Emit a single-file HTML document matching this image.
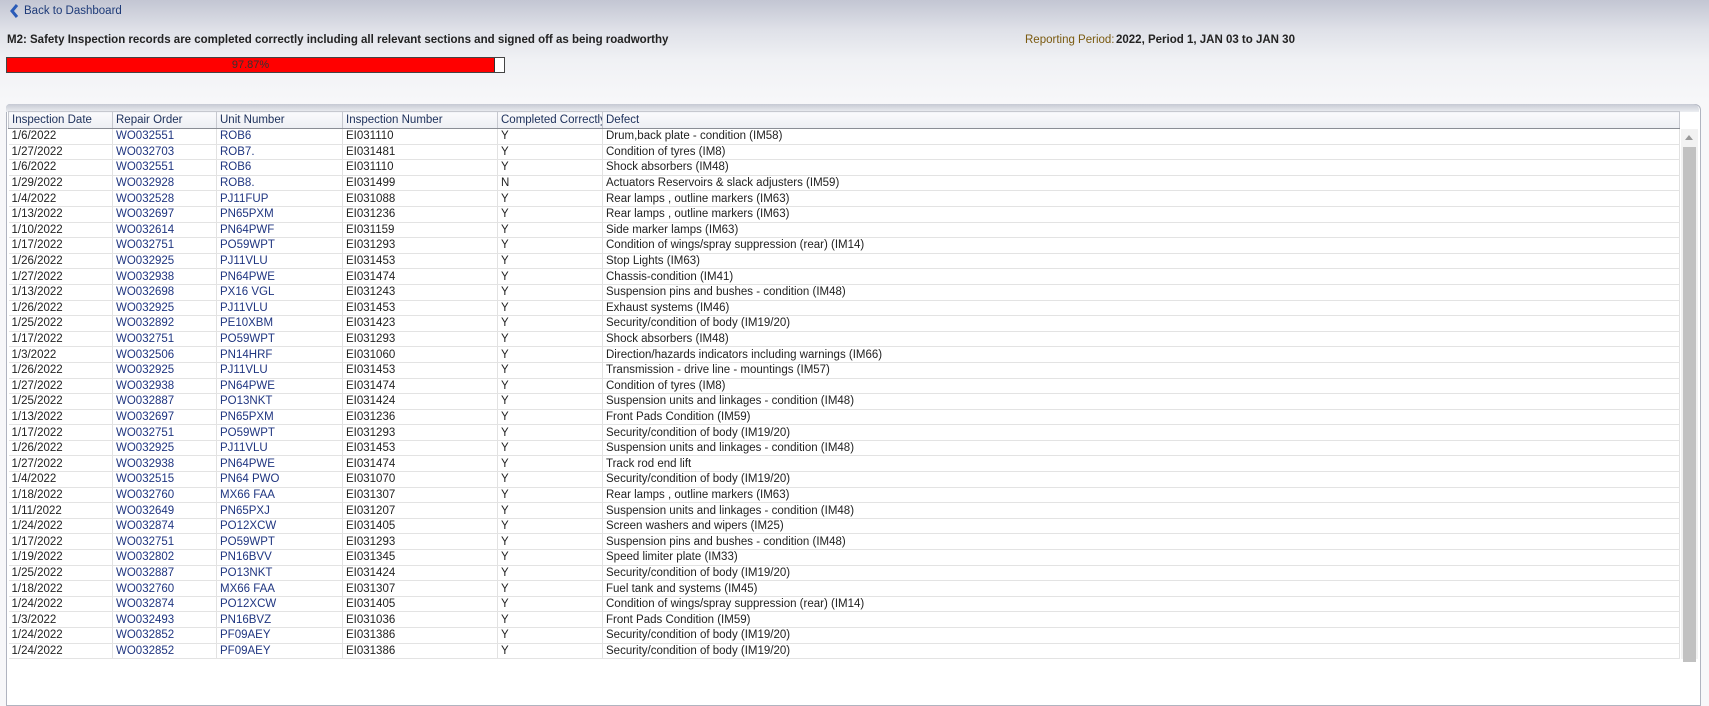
<!DOCTYPE html>
<html><head><meta charset="utf-8"><style>
html,body{margin:0;padding:0;width:1709px;height:658px;overflow:hidden;background:#f7f7f9;font-family:"Liberation Sans",sans-serif;font-size:11.5px;}
.top{position:absolute;left:0;top:0;width:1709px;height:110px;background:linear-gradient(#c3c6d3 0px,#dfe1e8 30px,#f0f1f4 60px,#f7f7f9 100px);}
.back{position:absolute;left:24px;top:5px;color:#1d3a78;}
.chev{position:absolute;left:8px;top:3px;}
.title{position:absolute;left:7px;top:34px;font-weight:bold;color:#222;}
.rp{position:absolute;left:1025px;top:34px;color:#7a5a10;}
.rpv{position:absolute;left:1116px;top:34px;font-weight:bold;color:#222;}
.bar{position:absolute;left:6px;top:57px;width:499px;height:16px;border:1px solid #444;background:#fff;box-sizing:border-box;}
.fill{position:absolute;left:0;top:0;width:487px;height:14px;background:#ff0000;border-right:1px solid #333;}
.pct{position:absolute;left:0;top:0;width:487px;text-align:center;line-height:14px;color:#333;font-size:11px;}
.panel{position:absolute;left:6px;top:104px;width:1693px;height:600px;border:1px solid #b0b4c0;border-radius:4px 6px 0 0;background:#fff;}
.panelTop{position:absolute;left:6px;top:104px;width:1693px;height:8px;background:linear-gradient(#c6c9d3,#eceef2);border-radius:4px 6px 0 0;}
table{position:absolute;left:8px;top:111px;width:1672px;border-collapse:collapse;table-layout:fixed;}
th{background:linear-gradient(#fafafc,#eceef3);font-weight:normal;color:#1c2f5a;text-align:left;height:16px;padding:0 3px;border:1px solid #c6c8cf;border-bottom:1px solid #8a8d95;white-space:nowrap;overflow:hidden;}
td{height:14.6px;padding:0 3px;border-right:1px solid #e2e2e2;border-bottom:1px solid #e3e3e3;white-space:nowrap;overflow:hidden;color:#222;line-height:14px;}
td.b{color:#1f3580;}
.sb{position:absolute;left:1681px;top:129px;width:17px;height:530px;background:#f2f2f2;}
.thumb{position:absolute;left:1683px;top:147px;width:13px;height:515px;background:#c1c1c1;}
.arr{position:absolute;left:1685px;top:135px;width:0;height:0;border-left:4px solid transparent;border-right:4px solid transparent;border-bottom:5px solid #999;}
</style></head><body>
<div class="top"></div>
<svg class="chev" width="14" height="16" viewBox="0 0 14 16"><path d="M9 2 L4 8 L9 14" stroke="#2a5bb8" stroke-width="3" fill="none"/></svg>
<div class="back">Back to Dashboard</div>
<div class="title">M2: Safety Inspection records are completed correctly including all relevant sections and signed off as being roadworthy</div>
<div class="rp">Reporting Period:</div>
<div class="rpv">2022, Period 1, JAN 03 to JAN 30</div>
<div class="bar"><div class="fill"></div><div class="pct">97.87%</div></div>
<div class="panel"></div><div class="panelTop"></div>
<table>
<colgroup><col style="width:104px"><col style="width:104px"><col style="width:126px"><col style="width:155px"><col style="width:105px"><col></colgroup>
<tr><th>Inspection Date</th><th>Repair Order</th><th>Unit Number</th><th>Inspection Number</th><th>Completed Correctly</th><th>Defect</th></tr>
<tr><td>1/6/2022</td><td class="b">WO032551</td><td class="b">ROB6</td><td>EI031110</td><td>Y</td><td>Drum,back plate - condition (IM58)</td></tr>
<tr><td>1/27/2022</td><td class="b">WO032703</td><td class="b">ROB7.</td><td>EI031481</td><td>Y</td><td>Condition of tyres (IM8)</td></tr>
<tr><td>1/6/2022</td><td class="b">WO032551</td><td class="b">ROB6</td><td>EI031110</td><td>Y</td><td>Shock absorbers (IM48)</td></tr>
<tr><td>1/29/2022</td><td class="b">WO032928</td><td class="b">ROB8.</td><td>EI031499</td><td>N</td><td>Actuators Reservoirs &amp; slack adjusters (IM59)</td></tr>
<tr><td>1/4/2022</td><td class="b">WO032528</td><td class="b">PJ11FUP</td><td>EI031088</td><td>Y</td><td>Rear lamps , outline markers (IM63)</td></tr>
<tr><td>1/13/2022</td><td class="b">WO032697</td><td class="b">PN65PXM</td><td>EI031236</td><td>Y</td><td>Rear lamps , outline markers (IM63)</td></tr>
<tr><td>1/10/2022</td><td class="b">WO032614</td><td class="b">PN64PWF</td><td>EI031159</td><td>Y</td><td>Side marker lamps (IM63)</td></tr>
<tr><td>1/17/2022</td><td class="b">WO032751</td><td class="b">PO59WPT</td><td>EI031293</td><td>Y</td><td>Condition of wings/spray suppression (rear) (IM14)</td></tr>
<tr><td>1/26/2022</td><td class="b">WO032925</td><td class="b">PJ11VLU</td><td>EI031453</td><td>Y</td><td>Stop Lights (IM63)</td></tr>
<tr><td>1/27/2022</td><td class="b">WO032938</td><td class="b">PN64PWE</td><td>EI031474</td><td>Y</td><td>Chassis-condition (IM41)</td></tr>
<tr><td>1/13/2022</td><td class="b">WO032698</td><td class="b">PX16 VGL</td><td>EI031243</td><td>Y</td><td>Suspension pins and bushes - condition (IM48)</td></tr>
<tr><td>1/26/2022</td><td class="b">WO032925</td><td class="b">PJ11VLU</td><td>EI031453</td><td>Y</td><td>Exhaust systems (IM46)</td></tr>
<tr><td>1/25/2022</td><td class="b">WO032892</td><td class="b">PE10XBM</td><td>EI031423</td><td>Y</td><td>Security/condition of body (IM19/20)</td></tr>
<tr><td>1/17/2022</td><td class="b">WO032751</td><td class="b">PO59WPT</td><td>EI031293</td><td>Y</td><td>Shock absorbers (IM48)</td></tr>
<tr><td>1/3/2022</td><td class="b">WO032506</td><td class="b">PN14HRF</td><td>EI031060</td><td>Y</td><td>Direction/hazards indicators including warnings (IM66)</td></tr>
<tr><td>1/26/2022</td><td class="b">WO032925</td><td class="b">PJ11VLU</td><td>EI031453</td><td>Y</td><td>Transmission - drive line - mountings (IM57)</td></tr>
<tr><td>1/27/2022</td><td class="b">WO032938</td><td class="b">PN64PWE</td><td>EI031474</td><td>Y</td><td>Condition of tyres (IM8)</td></tr>
<tr><td>1/25/2022</td><td class="b">WO032887</td><td class="b">PO13NKT</td><td>EI031424</td><td>Y</td><td>Suspension units and linkages - condition (IM48)</td></tr>
<tr><td>1/13/2022</td><td class="b">WO032697</td><td class="b">PN65PXM</td><td>EI031236</td><td>Y</td><td>Front Pads Condition (IM59)</td></tr>
<tr><td>1/17/2022</td><td class="b">WO032751</td><td class="b">PO59WPT</td><td>EI031293</td><td>Y</td><td>Security/condition of body (IM19/20)</td></tr>
<tr><td>1/26/2022</td><td class="b">WO032925</td><td class="b">PJ11VLU</td><td>EI031453</td><td>Y</td><td>Suspension units and linkages - condition (IM48)</td></tr>
<tr><td>1/27/2022</td><td class="b">WO032938</td><td class="b">PN64PWE</td><td>EI031474</td><td>Y</td><td>Track rod end lift</td></tr>
<tr><td>1/4/2022</td><td class="b">WO032515</td><td class="b">PN64 PWO</td><td>EI031070</td><td>Y</td><td>Security/condition of body (IM19/20)</td></tr>
<tr><td>1/18/2022</td><td class="b">WO032760</td><td class="b">MX66 FAA</td><td>EI031307</td><td>Y</td><td>Rear lamps , outline markers (IM63)</td></tr>
<tr><td>1/11/2022</td><td class="b">WO032649</td><td class="b">PN65PXJ</td><td>EI031207</td><td>Y</td><td>Suspension units and linkages - condition (IM48)</td></tr>
<tr><td>1/24/2022</td><td class="b">WO032874</td><td class="b">PO12XCW</td><td>EI031405</td><td>Y</td><td>Screen washers and wipers (IM25)</td></tr>
<tr><td>1/17/2022</td><td class="b">WO032751</td><td class="b">PO59WPT</td><td>EI031293</td><td>Y</td><td>Suspension pins and bushes - condition (IM48)</td></tr>
<tr><td>1/19/2022</td><td class="b">WO032802</td><td class="b">PN16BVV</td><td>EI031345</td><td>Y</td><td>Speed limiter plate (IM33)</td></tr>
<tr><td>1/25/2022</td><td class="b">WO032887</td><td class="b">PO13NKT</td><td>EI031424</td><td>Y</td><td>Security/condition of body (IM19/20)</td></tr>
<tr><td>1/18/2022</td><td class="b">WO032760</td><td class="b">MX66 FAA</td><td>EI031307</td><td>Y</td><td>Fuel tank and systems (IM45)</td></tr>
<tr><td>1/24/2022</td><td class="b">WO032874</td><td class="b">PO12XCW</td><td>EI031405</td><td>Y</td><td>Condition of wings/spray suppression (rear) (IM14)</td></tr>
<tr><td>1/3/2022</td><td class="b">WO032493</td><td class="b">PN16BVZ</td><td>EI031036</td><td>Y</td><td>Front Pads Condition (IM59)</td></tr>
<tr><td>1/24/2022</td><td class="b">WO032852</td><td class="b">PF09AEY</td><td>EI031386</td><td>Y</td><td>Security/condition of body (IM19/20)</td></tr>
<tr><td>1/24/2022</td><td class="b">WO032852</td><td class="b">PF09AEY</td><td>EI031386</td><td>Y</td><td>Security/condition of body (IM19/20)</td></tr>
</table>
<div class="sb"></div><div class="arr"></div><div class="thumb"></div>
</body></html>
